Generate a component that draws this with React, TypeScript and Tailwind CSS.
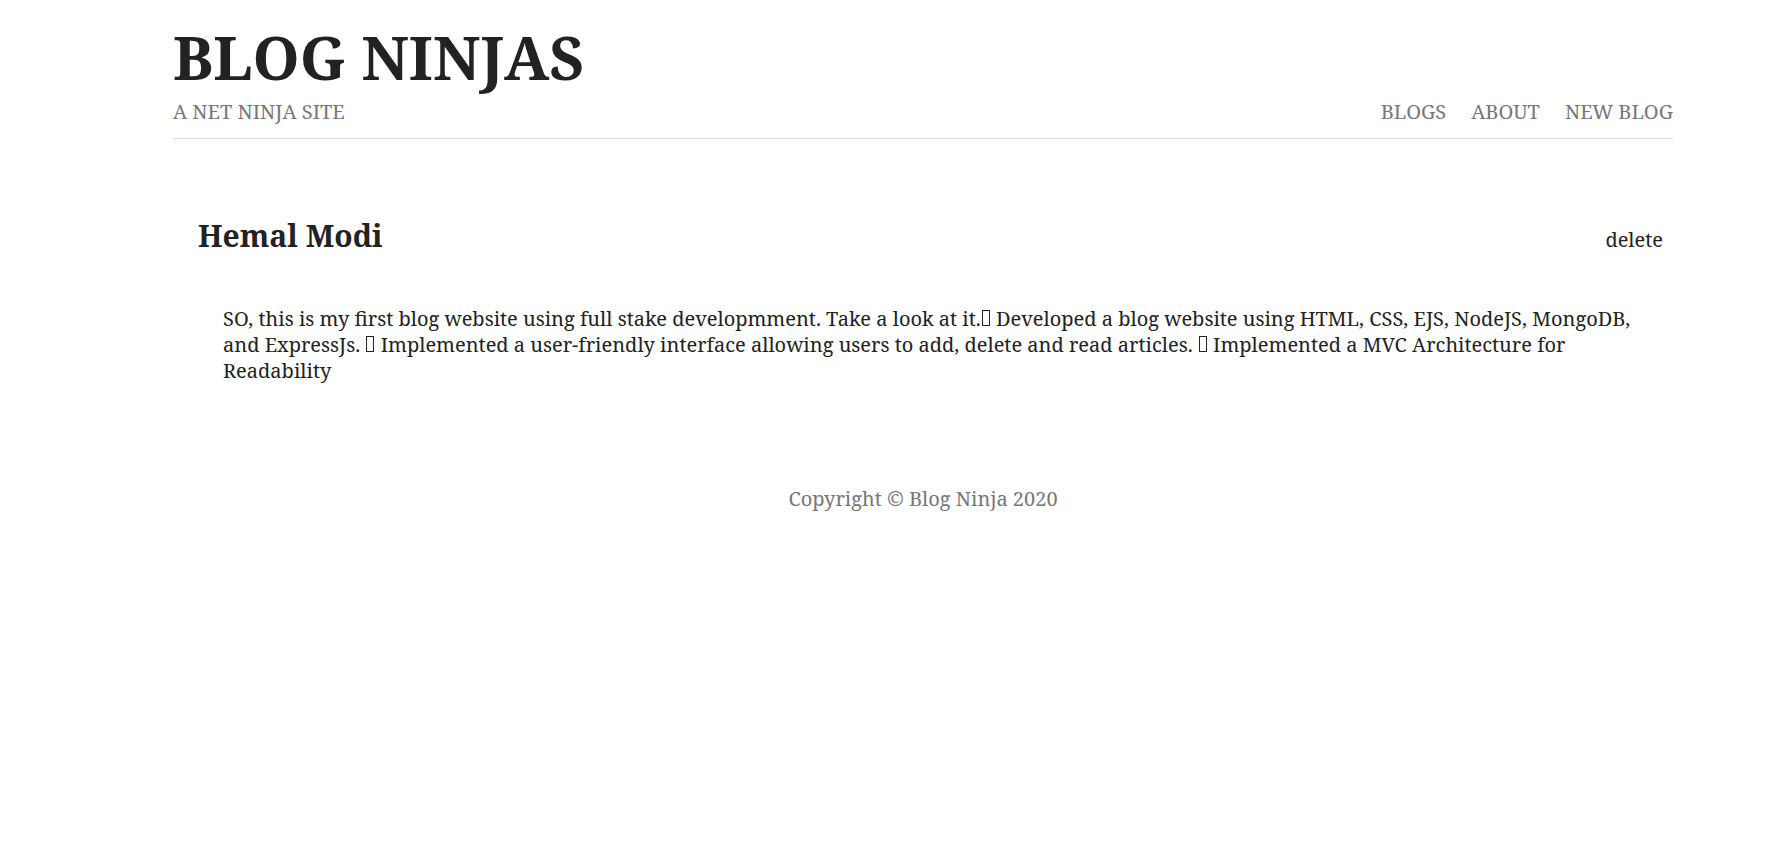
import { FC } from 'react';

const serif = "font-['Noto_Serif','DejaVu_Serif',serif]";

// stands in for the glyph the page could not render (tofu)
const Box: FC = () => (
  <span className="inline-block w-[8px] h-[16px] mx-[1px] border border-current align-baseline" />
);

const App: FC = () => (
  <div className={`min-h-[856px] bg-white ${serif}`}>
    <header className="ml-[173px] w-[1500px] pt-[21px] border-b border-[#dddddd] pb-[11px] flex items-end justify-between">
      <div>
        <h1 className="text-[60px] leading-[72px] font-bold text-[#222222]">BLOG NINJAS</h1>
        <p className="mt-[4px] text-[20px] leading-[30px] text-[#777777] uppercase">A net ninja site</p>
      </div>
      <nav className="flex gap-[25px] text-[20px] leading-[30px] text-[#777777]">
        <a>BLOGS</a>
        <a>ABOUT</a>
        <a>NEW BLOG</a>
      </nav>
    </header>

    <main className="ml-[173px] w-[1500px] pl-[25px] pt-[74px]">
      <div className="flex items-baseline justify-between pr-[10px]">
        <h2 className="text-[30px] leading-[45px] font-bold text-[#222222]">Hemal Modi</h2>
        <a className="text-[20px] leading-[30px] text-[#222222]">delete</a>
      </div>
      <div className="px-[25px] pt-[48px] text-[20px] leading-[26px] text-[#222222]">
        <p>
          SO, this is my first blog website using full stake developmment. Take a look at it.<Box /> Developed a blog
          website using HTML, CSS, EJS, NodeJS, MongoDB, and ExpressJs. <Box /> Implemented a user-friendly interface
          allowing users to add, delete and read articles. <Box /> Implemented a MVC Architecture for Readability
        </p>
      </div>
    </main>

    <footer className="ml-[173px] w-[1500px] pt-[100px] text-center text-[20px] leading-[30px] text-[#777777]">
      Copyright © Blog Ninja 2020
    </footer>
  </div>
);

export default App;
